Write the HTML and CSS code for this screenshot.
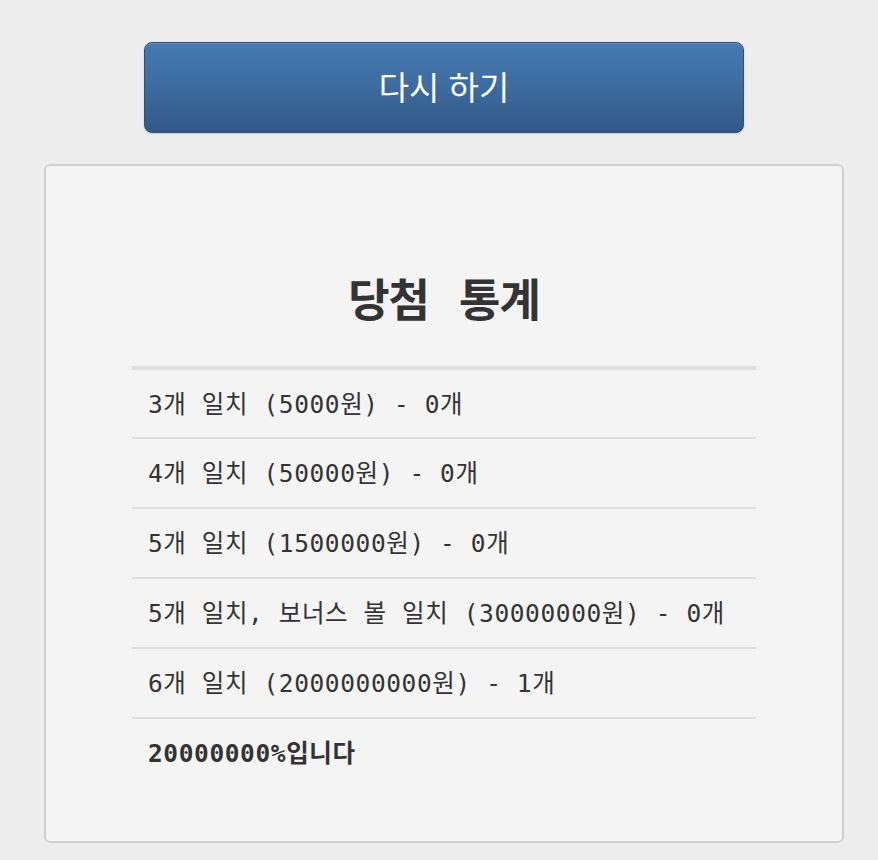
FILE: index.html
```html
<!DOCTYPE html>
<html lang="ko">
<head>
<meta charset="utf-8">
<title>당첨 통계</title>
<link rel="stylesheet" href="styles.css">
</head>
<body>
<div class="wrap">
  <button class="retry" type="button">다시 하기</button>
  <section class="card">
    <h2 class="title">당첨 통계</h2>
    <table class="stats">
      <tbody>
        <tr><td>3개 일치 (5000원) - 0개</td></tr>
        <tr><td>4개 일치 (50000원) - 0개</td></tr>
        <tr><td>5개 일치 (1500000원) - 0개</td></tr>
        <tr><td>5개 일치, 보너스 볼 일치 (30000000원) - 0개</td></tr>
        <tr><td>6개 일치 (2000000000원) - 1개</td></tr>
        <tr class="rate"><td>20000000%입니다</td></tr>
      </tbody>
    </table>
  </section>
</div>
</body>
</html>
```

FILE: styles.css
```css
html, body {
  margin: 0;
  padding: 0;
  background: #ededed;
}

.wrap {
  width: 800px;
  margin-left: 44px;
  padding-top: 42px;
  display: flex;
  flex-direction: column;
  align-items: center;
}

.retry {
  box-sizing: border-box;
  width: 600px;
  height: 91px;
  margin: 0;
  padding: 0 0 3px;
  border: 1px solid #2c4f7c;
  border-radius: 8px;
  background: linear-gradient(to bottom, #457ab2 0%, #3c6b9f 50%, #335886 100%);
  box-shadow: inset 0 1px 0 rgba(255, 255, 255, 0.18), 0 1px 2px rgba(0, 0, 0, 0.15);
  color: #ffffff;
  font-family: "Noto Sans CJK KR", "Noto Sans", sans-serif;
  font-size: 33px;
  font-weight: 400;
  line-height: 1;
  cursor: pointer;
}

.card {
  box-sizing: border-box;
  width: 800px;
  height: 679px;
  margin-top: 31px;
  padding-top: 106px;
  border: 2px solid #cfcfcf;
  border-radius: 6px;
  background: #f4f4f4;
}

.title {
  margin: 0 0 34px;
  height: 60px;
  line-height: 60px;
  text-align: center;
  font-family: "DejaVu Sans Mono", "Noto Sans CJK KR", monospace;
  font-size: 45px;
  letter-spacing: -1px;
  word-spacing: 4px;
  font-weight: 700;
  color: #333333;
}

.stats {
  width: 624px;
  margin: 0 auto;
  border-collapse: collapse;
  border-top: 4px solid #dddddd;
  font-family: "DejaVu Sans Mono", "Noto Sans CJK KR", monospace;
  font-size: 24.5px;
  letter-spacing: 0.6px;
  color: #333333;
}

.stats td {
  box-sizing: border-box;
  height: 70px;
  padding: 0 0 3px 16px;
  border-bottom: 2px solid #dddddd;
  vertical-align: middle;
  white-space: nowrap;
}

.stats .rate td {
  border-bottom: none;
  font-weight: 700;
  height: 68px;
}
```
